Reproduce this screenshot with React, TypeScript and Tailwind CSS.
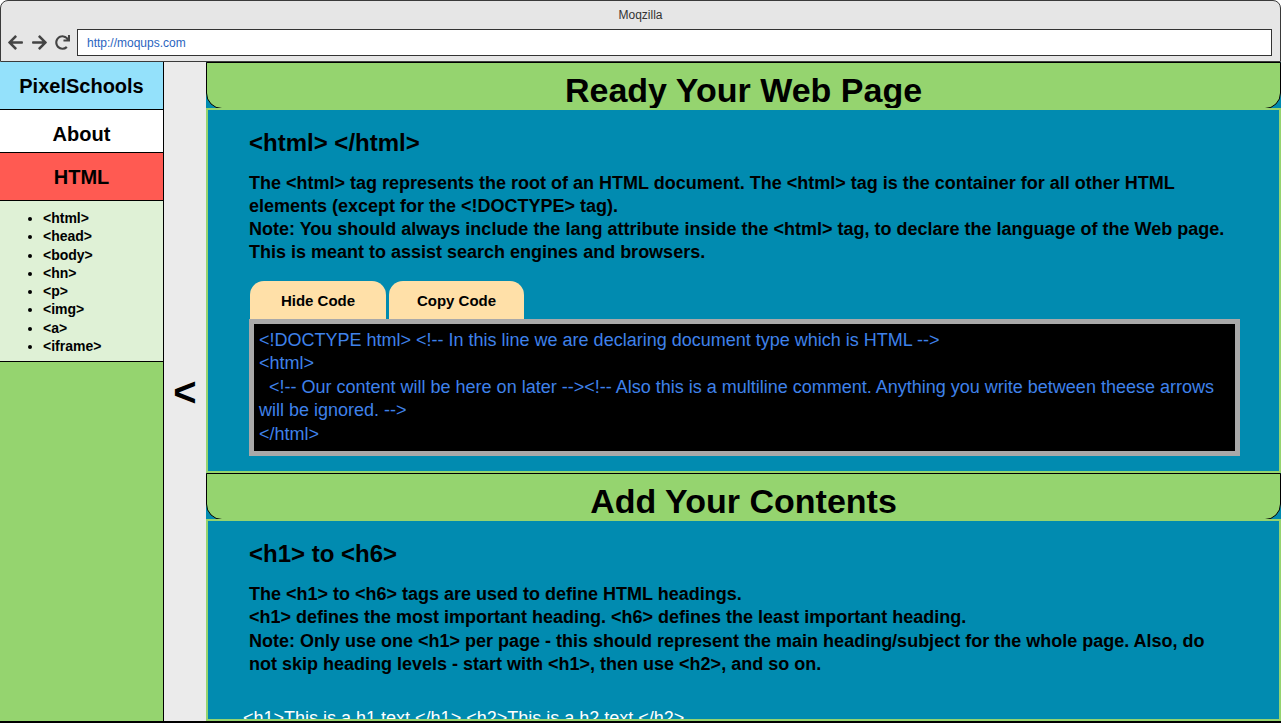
import { FaArrowLeft, FaArrowRight, FaRedo } from "react-icons/fa";

const tags = ["<html>", "<head>", "<body>", "<hn>", "<p>", "<img>", "<a>", "<iframe>"];

const SectionHeader = ({ title }: { title: string }) => (
  <div className="h-[47px] shrink-0 bg-[#95d46f] border border-black rounded-b-[16px] flex justify-center pt-[9px]">
    <h2 className="text-[34px] leading-[36px] font-bold text-black">{title}</h2>
  </div>
);

const App = () => {
  return (
    <div
      className="w-[1281px] h-[723px] flex flex-col overflow-hidden bg-white text-black"
      style={{ fontFamily: '"Liberation Sans", Arial, sans-serif' }}
    >
      {/* BROWSER CHROME */}
      <div className="h-[62px] shrink-0 bg-[#e6e6e6] border border-[#3a3a3a] rounded-t-[8px] flex flex-col">
        <div className="h-[28px] flex items-center justify-center text-[12px] text-[#333]">
          Moqzilla
        </div>
        <div className="flex items-center h-[27px]">
          <div className="w-[76px] flex items-center gap-[7px] pl-[6px] text-[#444]">
            <FaArrowLeft size={17} />
            <FaArrowRight size={17} />
            <FaRedo size={15} />
          </div>
          <div className="w-[1195px] h-[27px] bg-white border border-[#333] flex items-center pl-[9px] text-[12px] text-[#2a64c0]">
            http://moqups.com
          </div>
        </div>
      </div>

      {/* BODY */}
      <div className="flex-1 min-h-0 flex border-b-2 border-black">
        {/* sidebar */}
        <div className="w-[164px] shrink-0 border-r border-black flex flex-col bg-[#95d46f]">
          <div className="h-[48px] bg-[#94e1fb] border-b border-black flex items-center justify-center text-[20px] font-bold">
            PixelSchools
          </div>
          <div className="h-[43px] bg-white border-b border-black flex items-center justify-center pt-[5px] text-[20px] font-bold">
            About
          </div>
          <div className="h-[48px] bg-[#ff5a52] border-b border-black flex items-center justify-center text-[20px] font-bold">
            HTML
          </div>
          <ul className="h-[161px] bg-[#dff1d6] border-b border-black list-disc pl-[43px] pt-[8px] text-[14px] leading-[18.25px] font-bold">
            {tags.map((t) => (
              <li key={t}>{t}</li>
            ))}
          </ul>
        </div>

        {/* collapse arrow */}
        <div className="w-[42px] shrink-0 bg-[#ebebeb] flex items-center justify-center text-[40px] font-bold">
          &lt;
        </div>

        {/* main */}
        <div className="flex-1 min-w-0 bg-[#018bb0] flex flex-col overflow-hidden">
          <SectionHeader title="Ready Your Web Page" />
          <div className="relative -mt-px shrink-0 border-2 border-[#95d46f] pl-[41px] pr-[39px] pt-[20px] pb-[15px]">
            <h3 className="text-[24px] leading-[26px] font-bold">&lt;html&gt; &lt;/html&gt;</h3>
            <p className="mt-[16px] text-[18px] leading-[23px] font-bold">
              The &lt;html&gt; tag represents the root of an HTML document. The &lt;html&gt; tag is the container for all other HTML elements (except for the &lt;!DOCTYPE&gt; tag).
              <br />
              Note: You should always include the lang attribute inside the &lt;html&gt; tag, to declare the language of the Web page. This is meant to assist search engines and browsers.
            </p>
            <div className="mt-[17px] ml-px flex gap-[3px]">
              <button className="w-[136px] h-[38px] bg-[#ffe0a8] rounded-t-[14px] pt-[3px] text-[15px] font-bold">
                Hide Code
              </button>
              <button className="w-[135px] h-[38px] bg-[#ffe0a8] rounded-t-[14px] pt-[3px] text-[15px] font-bold">
                Copy Code
              </button>
            </div>
            <div className="bg-black border-[5px] border-[#a9a9a9] p-[5px] text-[18px] leading-[23.4px] text-[#3f82ea] whitespace-pre-wrap">
              {"<!DOCTYPE html> <!-- In this line we are declaring document type which is HTML -->\n<html>\n  <!-- Our content will be here on later --><!-- Also this is a multiline comment. Anything you write between theese arrows will be ignored. -->\n</html>"}
            </div>
          </div>

          <SectionHeader title="Add Your Contents" />
          <div className="relative -mt-px flex-1 min-h-0 overflow-hidden border-2 border-[#95d46f] pl-[41px] pr-[44px] pt-[20px]">
            <h3 className="text-[24px] leading-[26px] font-bold">&lt;h1&gt; to &lt;h6&gt;</h3>
            <p className="mt-[16px] text-[18px] leading-[23.4px] font-bold">
              The &lt;h1&gt; to &lt;h6&gt; tags are used to define HTML headings.
              <br />
              &lt;h1&gt; defines the most important heading. &lt;h6&gt; defines the least important heading.
              <br />
              Note: Only use one &lt;h1&gt; per page - this should represent the main heading/subject for the whole page. Also, do not skip heading levels - start with &lt;h1&gt;, then use &lt;h2&gt;, and so on.
            </p>
            <div className="mt-[30px] -ml-[6px] text-[18px] leading-[23px] text-white">
              &lt;h1&gt;This is a h1 text &lt;/h1&gt; &lt;h2&gt;This is a h2 text &lt;/h2&gt;
            </div>
          </div>
        </div>
      </div>
    </div>
  );
};

export default App;
